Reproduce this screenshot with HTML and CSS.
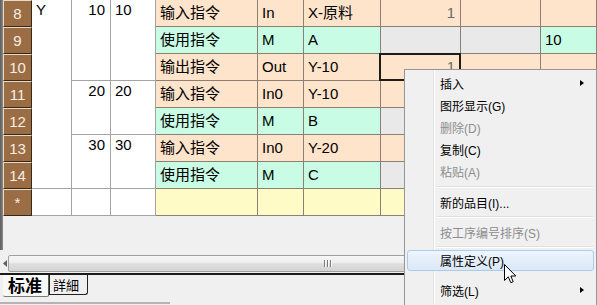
FILE: index.html
```html
<!DOCTYPE html>
<html lang="zh">
<head>
<meta charset="utf-8">
<title>Grid</title>
<link rel="stylesheet" href="styles.css">
</head>
<body>
<div class="win">
  <div class="upper">
    <div class="strip"></div>
    <div class="content">
      <div class="grid">
        <div class="rh">8</div>
        <div class="c w tp span7">Y</div>
        <div class="c w tp r span3">10</div>
        <div class="c w tp span3">10</div>
        <div class="c pe">输入指令</div>
        <div class="c pe">In</div>
        <div class="c pe">X-原料</div>
        <div class="c pe r num">1</div>
        <div class="c pe"></div>
        <div class="c pe"></div>

        <div class="rh">9</div>
        <div class="c mi">使用指令</div>
        <div class="c mi">M</div>
        <div class="c mi">A</div>
        <div class="c gr"></div>
        <div class="c gr"></div>
        <div class="c mi">10</div>

        <div class="rh">10</div>
        <div class="c pe">输出指令</div>
        <div class="c pe">Out</div>
        <div class="c pe">Y-10</div>
        <div class="c pe r num sel">1</div>
        <div class="c pe"></div>
        <div class="c pe"></div>

        <div class="rh">11</div>
        <div class="c w tp r span2">20</div>
        <div class="c w tp span2">20</div>
        <div class="c pe">输入指令</div>
        <div class="c pe">In0</div>
        <div class="c pe">Y-10</div>
        <div class="c pe"></div>
        <div class="c pe"></div>
        <div class="c pe"></div>

        <div class="rh">12</div>
        <div class="c mi">使用指令</div>
        <div class="c mi">M</div>
        <div class="c mi">B</div>
        <div class="c gr"></div>
        <div class="c gr"></div>
        <div class="c mi"></div>

        <div class="rh">13</div>
        <div class="c w tp r span2">30</div>
        <div class="c w tp span2">30</div>
        <div class="c pe">输入指令</div>
        <div class="c pe">In0</div>
        <div class="c pe">Y-20</div>
        <div class="c pe"></div>
        <div class="c pe"></div>
        <div class="c pe"></div>

        <div class="rh">14</div>
        <div class="c mi">使用指令</div>
        <div class="c mi">M</div>
        <div class="c mi">C</div>
        <div class="c gr"></div>
        <div class="c gr"></div>
        <div class="c mi"></div>

        <div class="rh">*</div>
        <div class="c w"></div>
        <div class="c w"></div>
        <div class="c w"></div>
        <div class="c ye"></div>
        <div class="c ye"></div>
        <div class="c ye"></div>
        <div class="c ye"></div>
        <div class="c ye"></div>
        <div class="c ye"></div>
      </div>
    </div>
  </div>

  <div class="hscroll">
    <div class="sbtn">
      <svg width="5" height="7" viewBox="0 0 5 7"><path d="M4 0 L4 7 L0 3.5 Z" fill="#606060"/></svg>
    </div>
    <div class="thumb"><span class="grip"></span></div>
  </div>

  <div class="tabbar">
    <div class="tab act">标准</div>
    <div class="tab">詳細</div>
  </div>
  <div class="foot"></div>

  <div class="menu">
    <div class="it sub">插入</div>
    <div class="it">图形显示(G)</div>
    <div class="it dis">删除(D)</div>
    <div class="it">复制(C)</div>
    <div class="it dis">粘贴(A)</div>
    <div class="sep s9"></div>
    <div class="it">新的品目(I)...</div>
    <div class="sep s8"></div>
    <div class="it dis">按工序编号排序(S)</div>
    <div class="sep s7"></div>
    <div class="it hl">属性定义(P)</div>
    <div class="gap"></div>
    <div class="it sub">筛选(L)</div>
  </div>

  <svg class="cursor" width="13" height="21" viewBox="0 0 13 21">
    <path d="M0.5 0.5 L0.5 16.5 L4.3 12.8 L6.8 18.7 L9.2 17.7 L6.8 12 L11.8 12 Z" fill="#fff" stroke="#000" stroke-width="1" stroke-linejoin="miter"/>
  </svg>
</div>
</body>
</html>
```

FILE: styles.css
```css
* { box-sizing: border-box; margin: 0; padding: 0; }
html, body { width: 597px; height: 305px; overflow: hidden; background: #f0f0f0; }
body { font-family: "Liberation Sans", "Noto Sans CJK SC", sans-serif; color: #000; }

.win { position: relative; width: 597px; height: 305px; overflow: hidden; background: #f0f0f0; }

.upper { display: flex; height: 254px; }
.strip { width: 3px; height: 250px; background: linear-gradient(90deg, #5c5c5c, #8a8a8a); }
.content { flex: 1; background: #f0f0f0; }

.grid {
  display: grid;
  grid-template-columns: 29px 40px 39px 45px 102px 46px 77px 80px 80px 1fr;
  grid-template-rows: repeat(8, 27px);
  font-size: 15px;
}

.rh {
  background: #9b6d45;
  color: #f6eee4;
  border: 1px solid;
  border-color: #e8d9c8 #3a2816 #3a2816 #e8d9c8;
  display: flex;
  align-items: center;
  justify-content: center;
  font-size: 15px;
  line-height: 18px;
}

.c {
  display: flex;
  align-items: center;
  padding: 0 4px;
  border-right: 1px solid #8c8075;
  border-bottom: 1px solid #8c8075;
  white-space: nowrap;
  line-height: 18px;
}
.w { background: #fff; border-color: #a3a3a3; }
.tp { align-items: flex-start; padding-top: 1px; }
.r { justify-content: flex-end; padding-right: 5px; }
.span7 { grid-row: span 7; }
.span3 { grid-row: span 3; }
.span2 { grid-row: span 2; }
.pe { background: #fde4cb; }
.mi { background: #c8fce4; }
.gr { background: #e9e9e9; }
.ye { background: #fffbc6; }
.num { color: #6a6a6a; }
.sel { position: relative; }
.sel::after {
  content: "";
  position: absolute;
  left: -2px; top: -1px; right: -1px; bottom: -1px;
  border: 2px solid #1c1c1c;
}

.hscroll { display: flex; height: 19px; padding-left: 3px; }
.sbtn { width: 18px; display: flex; align-items: center; justify-content: center; }
.thumb {
  position: relative;
  flex: none;
  width: 618px;
  margin-top: 1px;
  height: 17px;
  border: 1px solid #a0a0a0;
  border-radius: 2px;
  background: linear-gradient(#f7f7f7, #ededed 45%, #dedede 52%, #d4d4d4);
}
.grip {
  position: absolute;
  left: 315px; top: 4px;
  width: 8px; height: 7px;
  background: repeating-linear-gradient(90deg, #7a7a7a 0 1px, #fafafa 1px 2px, transparent 2px 3px);
}

.tabbar {
  display: flex;
  align-items: flex-start;
  height: 30px;
  border-top: 2px solid #1a1a1a;
  padding-left: 3px;
}
.tab {
  font-family: "Noto Sans CJK JP", "Noto Sans CJK SC", sans-serif;
  font-size: 13px;
  line-height: 19px;
  height: 20px;
  padding: 0 8px 0 3px;
  border: 1px solid #222;
  border-top: none;
  border-radius: 0 0 3px 0;
  background: #f0f0f0;
}
.tab.act {
  font-family: "Noto Sans CJK SC", sans-serif;
  font-weight: 700;
  font-size: 17px;
  line-height: 20px;
  height: 22px;
  width: 46px;
  padding: 0 0 0 5px;
  background: #f8f8f8;
  border: none;
  border-right: 1px solid #5a5a5a;
  border-bottom: 1px solid #7a7a7a;
  border-radius: 0 0 2px 2px;
}
.foot { position: absolute; left: 0; top: 302px; width: 170px; height: 2px; background: #b4b4b4; }

.menu {
  position: absolute;
  left: 404px; top: 69px;
  width: 193px; height: 250px;
  padding: 2px;
  border: 1px solid #979797;
  background: #f0f0f0 linear-gradient(90deg, transparent 28px, #e2e3e3 28px, #e2e3e3 29px, #ffffff 29px, #ffffff 30px, transparent 30px);
  font-family: "Liberation Sans", "Noto Sans CJK SC", sans-serif;
  font-size: 12px;
  box-shadow: 2px 2px 3px rgba(0,0,0,0.25);
}
.it {
  position: relative;
  height: 22px;
  display: flex;
  align-items: center;
  padding-left: 33px;
  white-space: nowrap;
}
.dis { color: #8d8d8d; }
.sub::after {
  content: "";
  position: absolute;
  right: 10px; top: 8px;
  border-left: 4px solid #000;
  border-top: 3.5px solid transparent;
  border-bottom: 3.5px solid transparent;
}
.hl {
  padding-left: 32px;
  background: linear-gradient(#eef5fd, #dae8f8);
  border: 1px solid #aacbee;
  border-radius: 3px;
  height: 21px;
}
.sep { position: relative; }
.sep::after {
  content: "";
  position: absolute;
  left: 30px; right: 1px;
  height: 2px;
  background: linear-gradient(#e0e0e0 0 1px, #ffffff 1px 2px);
}
.s9 { height: 9px; }
.s9::after { top: 4px; }
.s8 { height: 8px; }
.s8::after { top: 3px; }
.s7 { height: 7px; }
.s7::after { top: 3px; }
.gap { height: 8px; }

.cursor { position: absolute; left: 504px; top: 264px; }
```
